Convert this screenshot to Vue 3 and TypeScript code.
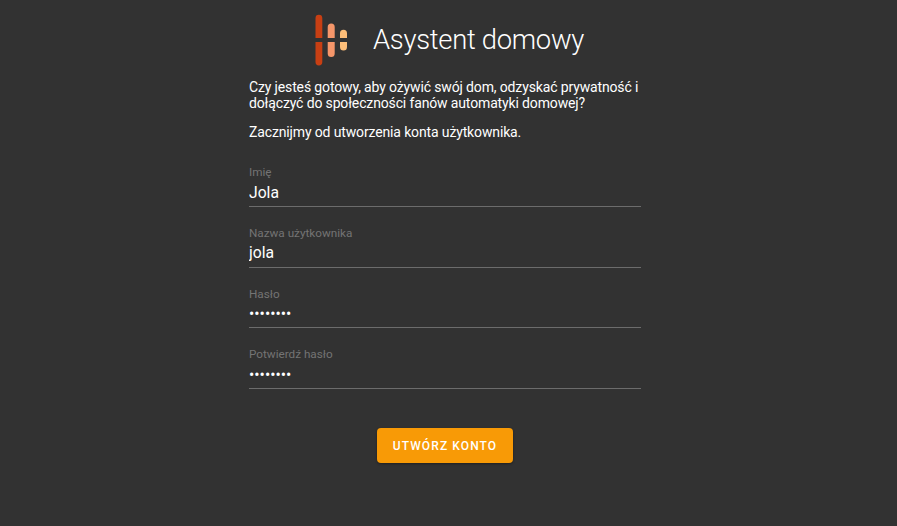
<script setup lang="ts">
import { reactive } from 'vue'

interface Field {
  key: string
  label: string
  type: 'text' | 'password'
  value: string
}

const fields = reactive<Field[]>([
  { key: 'name', label: 'Imię', type: 'text', value: 'Jola' },
  { key: 'username', label: 'Nazwa użytkownika', type: 'text', value: 'jola' },
  { key: 'password', label: 'Hasło', type: 'password', value: 'password' },
  { key: 'confirm', label: 'Potwierdź hasło', type: 'password', value: 'password' },
])
</script>

<template>
  <main class="page">
    <div class="content">
      <header class="header">
        <svg class="logo" width="34" height="52" viewBox="0 0 34 52" aria-hidden="true">
          <path fill="#c83f13" d="M1.5 24V4.2a3.4 3.4 0 0 1 6.8 0V24zM1.5 28h6.8v20a3.4 3.4 0 0 1-6.8 0z" />
          <path fill="#f5966a" d="M13.7 24V13a3.5 3.5 0 0 1 7 0v11zM13.7 28h7v11.4a3.5 3.5 0 0 1-7 0z" />
          <path fill="#fdbe79" d="M26 24v-4.8a3.5 3.5 0 0 1 7 0V24zM26 28h7v5a3.5 3.5 0 0 1-7 0z" />
        </svg>
        <h1 class="title">Asystent domowy</h1>
      </header>
      <p class="intro">
        Czy jesteś gotowy, aby ożywić swój dom, odzyskać prywatność i<br />dołączyć do społeczności fanów automatyki domowej?
      </p>
      <p class="intro">Zacznijmy od utworzenia konta użytkownika.</p>
      <form class="form" @submit.prevent>
        <label v-for="field in fields" :key="field.key" class="field">
          <span class="label">{{ field.label }}</span>
          <input v-model="field.value" class="input" :type="field.type" />
        </label>
        <button class="submit" type="submit">Utwórz konto</button>
      </form>
    </div>
  </main>
</template>

<style>
body {
  background: #323232;
}
</style>

<style scoped>
.page {
  box-sizing: border-box;
  min-height: 526px;
  padding: 14px 0 0 249px;
  background: #323232;
  color: #fff;
  font-family: Roboto, sans-serif;
  font-size: 14px;
}
.content {
  width: 392px;
}
.header {
  display: flex;
  align-items: center;
  height: 52px;
  padding-left: 65px;
}
.logo {
  display: block;
}
.title {
  margin: 0 0 0 25px;
  font-size: 27.4px;
  font-weight: 300;
  line-height: 32px;
  letter-spacing: -0.29px;
  white-space: nowrap;
}
.intro {
  margin: 13px 0 0;
  line-height: 16px;
  letter-spacing: -0.14px;
  white-space: nowrap;
}
.form {
  display: flex;
  flex-direction: column;
  margin-top: 24.2px;
}
.field {
  display: flex;
  flex-direction: column;
  box-sizing: border-box;
  height: 60.7px;
}
.label {
  height: 17px;
  color: #747474;
  font-size: 11.72px;
  line-height: 17px;
}
.input {
  box-sizing: border-box;
  width: 100%;
  height: 25.8px;
  margin: 0;
  padding: 0 0 3px;
  border: 0;
  border-bottom: 1px solid #6c6c6c;
  border-radius: 0;
  outline: 0;
  background: transparent;
  color: #fff;
  font: 400 15.7px/22px Roboto, sans-serif;
}
.submit {
  align-self: center;
  width: 135.4px;
  height: 35px;
  margin-top: 21.4px;
  padding: 1px 0 0;
  border: 0;
  border-radius: 4px;
  background: #f89a06;
  box-shadow: 0 1px 2px rgba(0, 0, 0, 0.25), 0 1px 3px rgba(0, 0, 0, 0.12);
  color: #fff;
  font: 500 12px/34px Roboto, sans-serif;
  letter-spacing: 1.1px;
  text-transform: uppercase;
}
</style>
